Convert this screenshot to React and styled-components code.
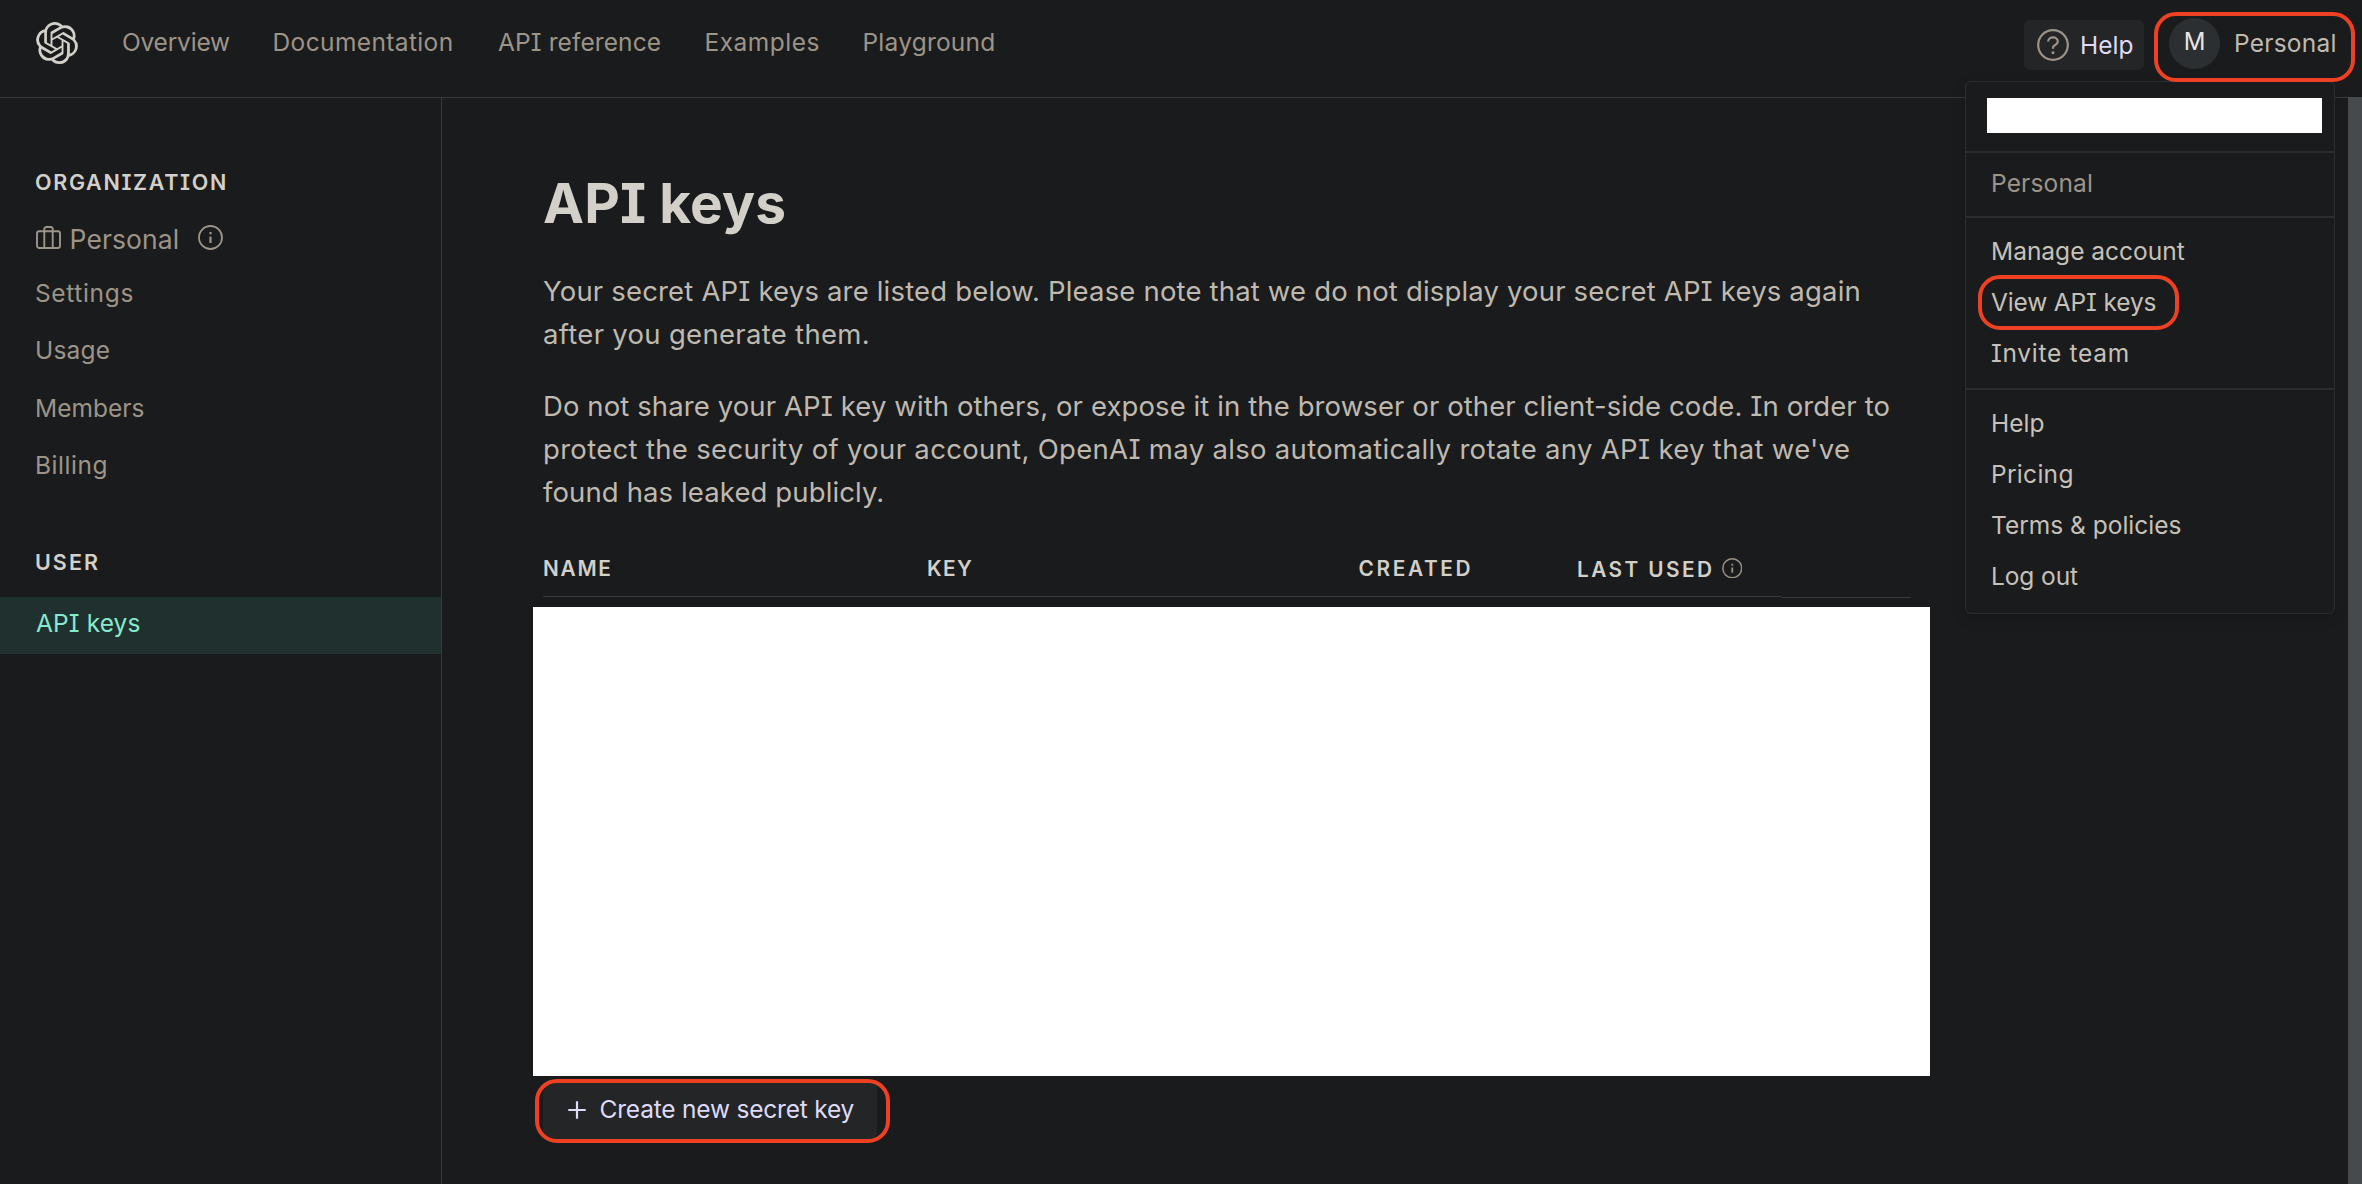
import React from "react";
import styled, { createGlobalStyle } from "styled-components";
import { SiOpenai } from "react-icons/si";

const c = {
  bg: "#1a1b1c",
  line: "#363a3c",
  menuLine: "#2b2e30",
  muted: "#9d9488",
  body: "#bfb9b0",
  light: "#d3cfc9",
  lavender: "#dedaf8",
  surface: "#232526",
  ring: "#ee4023",
};

const Global = createGlobalStyle`
  * { box-sizing: border-box; }
  html, body { margin: 0; background: ${c.bg}; overflow: hidden; }
  body {
    font-family: Inter, "Liberation Sans", sans-serif;
    font-feature-settings: "cv08";
    color: ${c.body};
  }
  ul { list-style: none; margin: 0; padding: 0; }
`;

const Page = styled.div`
  position: relative;
  width: 2362px;
  height: 1184px;
  display: flex;
  flex-direction: column;
  overflow: hidden;
`;

const Label = styled.span`
  display: inline-block;
  white-space: nowrap;
  letter-spacing: ${(p) => p.$ls || 0}px;
`;

const Header = styled.header`
  height: 98px;
  flex: none;
  display: flex;
  align-items: flex-start;
  border-bottom: 1px solid ${c.line};
  padding-left: 35.5px;
`;

const Logo = styled(SiOpenai)`
  width: 42px;
  height: 42px;
  margin-top: 22px;
  color: ${c.light};
`;

const Nav = styled.nav`
  display: grid;
  grid-template-columns: 150.5px 225.5px 206.5px 158px auto;
  margin: 22px 0 0 44.5px;
  height: 41px;
  align-items: center;
  font-size: 24.5px;
  line-height: 41px;
  color: ${c.muted};
`;

const Account = styled.div`
  margin-left: auto;
  display: flex;
  align-items: flex-start;
`;

const HelpButton = styled.div`
  width: 120px;
  height: 50px;
  margin-top: 20px;
  padding-left: 13px;
  display: flex;
  align-items: center;
  gap: 11px;
  border-radius: 6px;
  background: ${c.surface};
  color: ${c.lavender};
  font-size: 24.5px;
  line-height: 49px;
`;

const Avatar = styled.div`
  width: 51px;
  height: 51px;
  margin: 18px 0 0 25px;
  border-radius: 50%;
  background: #2b2f31;
  color: #e8e6e3;
  font-size: 24px;
  line-height: 47px;
  text-align: center;
`;

const AccountName = styled.div`
  width: 128px;
  margin: 18px 0 0 14px;
  font-size: 24.5px;
  line-height: 51px;
`;

const Columns = styled.div`
  flex: 1;
  display: flex;
  min-height: 0;
`;

const Sidebar = styled.aside`
  width: 442px;
  flex: none;
  border-right: 1px solid ${c.line};
  padding-top: 69px;
  font-size: 24.5px;
  color: ${c.muted};
`;

const SideHeading = styled.h2`
  margin: ${(p) => p.$top || 0}px 0 0;
  padding-left: 35px;
  height: 31px;
  font-size: 21.5px;
  line-height: 31px;
  font-weight: 600;
  color: ${c.light};
`;

const OrgRow = styled.div`
  display: flex;
  align-items: center;
  height: 41px;
  margin: 21px 0 6px;
  padding-left: 36px;
  font-size: 26.5px;
  line-height: 41px;

  svg { flex: none; margin-bottom: 4px; }
  svg:first-child { margin-right: 8.5px; }
  svg:last-child { margin-left: 19px; }
`;

const SideItem = styled.li`
  height: 57.4px;
  line-height: 54px;
  padding-left: 35px;
`;

const ActiveItem = styled.div`
  height: 57px;
  margin-top: 19px;
  padding-left: 36px;
  line-height: 53px;
  background: #1f302f;
  color: #85e9cc;
`;

const Main = styled.main`
  flex: 1;
  padding: 75px 0 0 101px;
`;

const Title = styled.h1`
  margin: 0 0 36.5px;
  height: 60px;
  font-size: 55px;
  line-height: 60px;
  font-weight: 700;
  color: ${c.light};
`;

const Para = styled.p`
  margin: 0 0 29px;
  font-size: 27.5px;
  line-height: 43px;
  ${Label} { display: table; }
`;

const TableHead = styled.div`
  display: grid;
  grid-template-columns: 384px 431.5px 218.5px 204px 130px;
  width: 1368px;
  margin-top: -2.5px;
  height: 58px;
  align-items: start;
`;

const Th = styled.div`
  height: ${(p) => p.$h || 57}px;
  display: flex;
  align-items: center;
  border-bottom: 1px solid ${c.line};
  font-size: 20.8px;
  font-weight: 600;
  line-height: 56px;
  padding-top: 2px;
  color: ${c.light};
  svg { margin: -4px 0 0 7.5px; color: ${c.muted}; }
`;

const LastUsed = styled.span`
  display: flex;
  align-items: center;
  height: 58px;
  padding-top: 2px;
`;

const Redacted = styled.div`
  width: ${(p) => p.$w}px;
  height: ${(p) => p.$h}px;
  background: #fff;
`;

const KeyList = styled(Redacted)`
  margin: 9px 0 0 -10px;
`;

const CreateButton = styled.div`
  width: 334px;
  height: 57px;
  margin-top: 6px;
  padding-left: 24.5px;
  display: flex;
  align-items: center;
  gap: 14px;
  border-radius: 6px;
  background: ${c.surface};
  color: ${c.lavender};
  font-size: 24.5px;
  line-height: 53px;
  padding-bottom: 2px;
`;

const Scrollbar = styled.div`
  width: 14px;
  flex: none;
  margin-top: -1px;
  background: #464a4c;
`;

const Menu = styled.div`
  position: absolute;
  left: 1965px;
  top: 81px;
  width: 370px;
  height: 533px;
  border: 1px solid ${c.menuLine};
  border-radius: 6px;
  background: ${c.bg};
  box-shadow: 0 4px 14px rgba(0, 0, 0, 0.14);
  font-size: 24.5px;
`;

const MenuEmail = styled.div`
  height: 69px;
  padding: 16px 0 0 21px;
`;

const MenuGroup = styled.ul`
  border-top: 2px solid ${c.menuLine};
  padding: ${(p) => p.$pt}px 0 ${(p) => p.$pb}px 25px;
  color: ${(p) => (p.$muted ? c.muted : "#c6c1b9")};
`;

const MenuItem = styled.li`
  height: 51px;
  line-height: 51px;
`;

const Ring = styled.div`
  position: absolute;
  left: ${(p) => p.$x}px;
  top: ${(p) => p.$y}px;
  width: ${(p) => p.$w}px;
  height: ${(p) => p.$h}px;
  border: 4px solid ${c.ring};
  border-radius: 22px;
`;

const InfoIcon = ({ size }) => (
  <svg width={size} height={size} viewBox="0 0 25 25" fill="none" stroke="currentColor" strokeWidth="1.8">
    <circle cx="12.5" cy="12.5" r="11.5" />
    <path d="M12.5 11.6v6.4" strokeWidth="2.2" />
    <path d="M12.5 7v2.3" strokeWidth="2.2" />
  </svg>
);

const BriefcaseIcon = () => (
  <svg width="25" height="23" viewBox="0 0 25 23" fill="none" stroke="currentColor" strokeWidth="1.9">
    <rect x="1" y="5.3" width="23" height="16.7" rx="2.2" />
    <path d="M8.3 22V3a2 2 0 0 1 2-2h4.4a2 2 0 0 1 2 2v19" />
  </svg>
);

const HelpIcon = () => (
  <svg width="32" height="32" viewBox="0 0 32 32" fill="none" stroke={c.muted} strokeWidth="2.2">
    <circle cx="16" cy="16" r="14.8" />
    <path d="M11.2 12.6c0-2.5 2-4.2 4.8-4.2s4.8 1.7 4.8 4.1c0 2.8-2.7 3.3-4.1 4.6-.6.6-.7 1.3-.7 2.6" />
    <path d="M16 22.4v2.6" strokeWidth="2.6" />
  </svg>
);

const PlusIcon = () => (
  <svg width="18" height="18" viewBox="0 0 18 18" stroke="currentColor" strokeWidth="2.2">
    <path d="M9 .3v17.4M.3 9h17.4" />
  </svg>
);

export default function App() {
  return (
    <Page>
      <Global />
      <Header>
        <Logo />
        <Nav>
          <Label $ls={-0.2}>Overview</Label>
          <Label $ls={0.38}>Documentation</Label>
          <Label $ls={0.1}>API reference</Label>
          <Label $ls={0.5}>Examples</Label>
          <Label $ls={0.22}>Playground</Label>
        </Nav>
        <Account>
          <HelpButton><HelpIcon /><Label>Help</Label></HelpButton>
          <Avatar>M</Avatar>
          <AccountName><Label $ls={0.23}>Personal</Label></AccountName>
        </Account>
      </Header>
      <Columns>
        <Sidebar>
          <SideHeading><Label $ls={1.68}>ORGANIZATION</Label></SideHeading>
          <OrgRow><BriefcaseIcon /><Label $ls={0.1}>Personal</Label><InfoIcon size={25} /></OrgRow>
          <ul>
            <SideItem><Label $ls={0.65}>Settings</Label></SideItem>
            <SideItem><Label $ls={0.19}>Usage</Label></SideItem>
            <SideItem><Label>Members</Label></SideItem>
            <SideItem><Label $ls={0.54}>Billing</Label></SideItem>
          </ul>
          <SideHeading $top={51.4}><Label $ls={2.05}>USER</Label></SideHeading>
          <ActiveItem><Label $ls={0.11}>API keys</Label></ActiveItem>
        </Sidebar>
        <Main>
          <Title><Label $ls={0.1}>API keys</Label></Title>
          <Para>
            <Label $ls={0.172}>Your secret API keys are listed below. Please note that we do not display your secret API keys again</Label>
            <Label $ls={0.3}>after you generate them.</Label>
          </Para>
          <Para>
            <Label $ls={0.098}>Do not share your API key with others, or expose it in the browser or other client-side code. In order to</Label>
            <Label $ls={0.313}>protect the security of your account, OpenAI may also automatically rotate any API key that we've</Label>
            <Label $ls={0.116}>found has leaked publicly.</Label>
          </Para>
          <TableHead>
            <Th><Label $ls={1.73}>NAME</Label></Th>
            <Th><Label $ls={1.4}>KEY</Label></Th>
            <Th><Label $ls={2.65}>CREATED</Label></Th>
            <Th><LastUsed><Label $ls={2.42}>LAST USED</Label><InfoIcon size={20.5} /></LastUsed></Th>
            <Th $h={58} />
          </TableHead>
          <KeyList $w={1397} $h={469} />
          <CreateButton><PlusIcon /><Label $ls={-0.2}>Create new secret key</Label></CreateButton>
        </Main>
        <Scrollbar />
      </Columns>
      <Menu>
        <MenuEmail><Redacted $w={335} $h={35} /></MenuEmail>
        <MenuGroup $muted $pt={5} $pb={7}>
          <MenuItem><Label $ls={0.16}>Personal</Label></MenuItem>
        </MenuGroup>
        <MenuGroup $pt={8} $pb={9}>
          <MenuItem><Label>Manage account</Label></MenuItem>
          <MenuItem><Label $ls={-0.15}>View API keys</Label></MenuItem>
          <MenuItem><Label $ls={0.72}>Invite team</Label></MenuItem>
        </MenuGroup>
        <MenuGroup $pt={8} $pb={0}>
          <MenuItem><Label>Help</Label></MenuItem>
          <MenuItem><Label $ls={0.3}>Pricing</Label></MenuItem>
          <MenuItem><Label>Terms & policies</Label></MenuItem>
          <MenuItem><Label $ls={-0.1}>Log out</Label></MenuItem>
        </MenuGroup>
      </Menu>
      <Ring $x={2154} $y={12} $w={201} $h={70} />
      <Ring $x={1978} $y={275} $w={201} $h={55} />
      <Ring $x={535} $y={1079} $w={355} $h={64} />
    </Page>
  );
}
